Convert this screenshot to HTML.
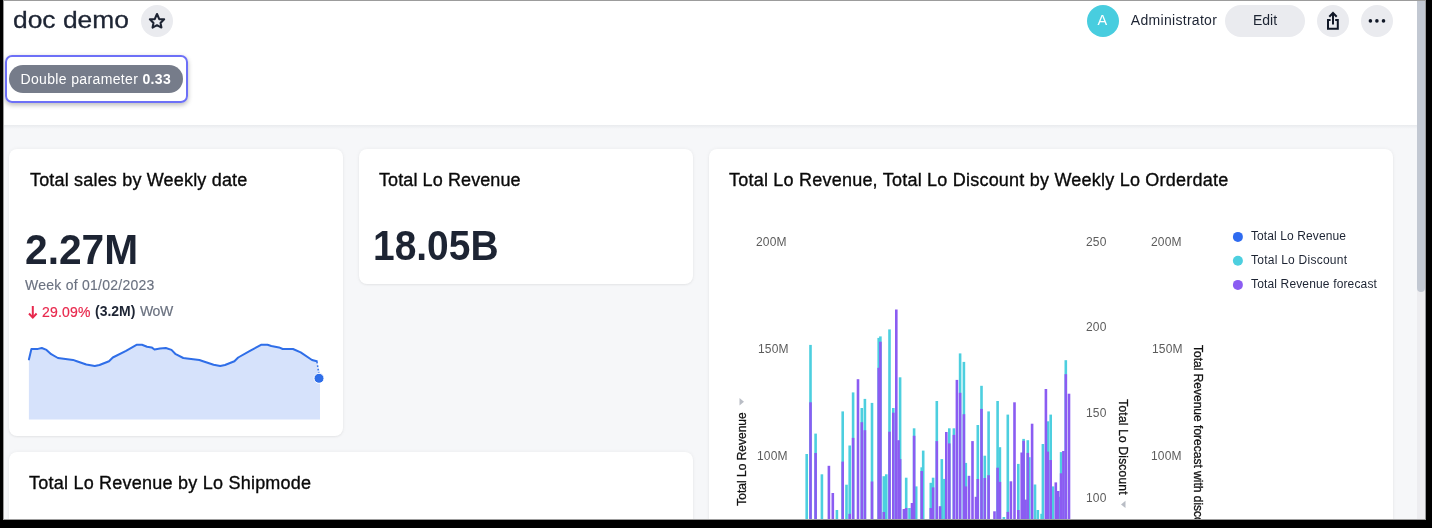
<!DOCTYPE html>
<html><head><meta charset="utf-8">
<style>
*{box-sizing:border-box;margin:0;padding:0}
html,body{width:1432px;height:528px;overflow:hidden;background:#000;font-family:"Liberation Sans",sans-serif}
.win{position:absolute;left:3px;top:0;width:1423px;height:520px;background:#9c9c9c;overflow:hidden}
.inner{position:absolute;left:1px;top:1px;width:1421px;height:518px;background:#f6f7f9;overflow:hidden}
.hdr{position:absolute;left:0;top:0;width:1413px;height:124px;background:#fff}
.hsh{position:absolute;left:0;top:124px;width:1413px;height:4px;background:linear-gradient(#e9ebee,#f6f7f9)}
.abs{position:absolute;white-space:nowrap}
.sb{position:absolute;left:1413px;top:0;width:8px;height:518px;background:#ededf0}
.thumb{position:absolute;left:0;top:0;width:8px;height:291px;background:#c2c8d2;border-radius:0 0 4px 4px}
.card{position:absolute;background:#fff;border-radius:8px;box-shadow:0 0 4px rgba(0,0,0,0.05),0 1px 2px rgba(0,0,0,0.05)}
.title{position:absolute;font-size:18px;line-height:22px;color:#0f1218;white-space:nowrap}
.btn{position:absolute;border-radius:16px;background:#eaebef}
.ov{position:absolute;left:0;top:0;width:1432px;height:519px;overflow:hidden;will-change:transform}
.t{position:absolute;white-space:nowrap;line-height:1}
.ax{position:absolute;white-space:nowrap;font-size:12px;line-height:14px;color:#5c5c5c;letter-spacing:0.2px}
.lg{position:absolute;white-space:nowrap;font-size:12px;line-height:14px;color:#1d2433}
</style></head><body>
<div class="win"><div class="inner">
  <div class="hdr">
    <div class="btn" style="left:137px;top:4px;width:32px;height:32px"></div>
    <div class="abs" style="left:1082.5px;top:4px;width:32px;height:32px;border-radius:50%;background:#48cddf"></div>
    <div class="btn" style="left:1221px;top:4px;width:80px;height:32px"></div>
    <div class="btn" style="left:1313px;top:4px;width:32px;height:32px"></div>
    <div class="btn" style="left:1357px;top:4px;width:32px;height:32px"></div>
    <div class="abs" style="left:1px;top:54px;width:183px;height:48px;border:2px solid #6d70f7;border-radius:7px;box-shadow:0 2px 5px rgba(0,0,0,0.28)"></div>
    <div class="abs" style="left:5px;top:64px;width:174px;height:28px;border-radius:14px;background:#767c8a"></div>
  </div>
  <div class="hsh"></div>
  <div class="sb"><div class="thumb"></div></div>
  <div class="card" style="left:5px;top:147.5px;width:334px;height:287.5px"></div>
  <div class="card" style="left:355px;top:148px;width:334px;height:135px"></div>
  <div class="card" style="left:705px;top:148px;width:684px;height:400px"></div>
  <div class="card" style="left:5px;top:451px;width:684px;height:100px"></div>
</div></div>
<div class="ov">
  <!-- header text -->
  <div class="t" style="left:13px;top:8px;font-size:24px;color:#1d2433;transform-origin:0 0;transform:scaleX(1.1);-webkit-text-stroke:0.3px #1d2433">doc demo</div>
  <div class="t" style="left:1097.5px;top:13px;font-size:14.5px;color:#fff">A</div>
  <div class="t" style="left:1130.8px;top:13px;font-size:14px;color:#1d2433;letter-spacing:0.3px">Administrator</div>
  <div class="t" style="left:1253px;top:13px;font-size:14px;color:#1d2433;letter-spacing:0px">Edit</div>
  <div class="t" style="left:20.5px;top:72px;font-size:14px;color:#fff;letter-spacing:0.35px">Double parameter <b>0.33</b></div>
  <!-- card titles -->
  <div class="t" style="left:30px;top:171px;font-size:18px;color:#0a0a0a;-webkit-text-stroke:0.35px #0a0a0a;letter-spacing:0.18px">Total sales by Weekly date</div>
  <div class="t" style="left:379px;top:171px;font-size:18px;color:#0a0a0a;-webkit-text-stroke:0.35px #0a0a0a;letter-spacing:0.1px">Total Lo Revenue</div>
  <div class="t" style="left:729px;top:171px;font-size:18px;color:#0a0a0a;-webkit-text-stroke:0.35px #0a0a0a;letter-spacing:0.22px">Total Lo Revenue, Total Lo Discount by Weekly Lo Orderdate</div>
  <div class="t" style="left:29px;top:474px;font-size:18px;color:#0a0a0a;-webkit-text-stroke:0.35px #0a0a0a;letter-spacing:0.23px">Total Lo Revenue by Lo Shipmode</div>
  <!-- KPI 1 -->
  <div class="t" style="left:25px;top:229px;font-size:42px;font-weight:bold;color:#1d2433;transform-origin:0 0;transform:scaleX(0.969)">2.27M</div>
  <div class="t" style="left:25px;top:278px;font-size:14px;color:#6b7280;letter-spacing:0.25px;-webkit-text-stroke:0.15px #6b7280">Week of 01/02/2023</div>
  <div class="t" style="left:42px;top:304.5px;font-size:14px;color:#e8294d;letter-spacing:0.2px;-webkit-text-stroke:0.2px #e8294d">29.09%</div>
  <div class="t" style="left:95px;top:304px;font-size:14px;font-weight:bold;color:#1d2433">(3.2M)</div>
  <div class="t" style="left:140px;top:304px;font-size:14px;color:#6b7280;letter-spacing:-0.4px;-webkit-text-stroke:0.2px #6b7280">WoW</div>
  <!-- KPI 2 -->
  <div class="t" style="left:373px;top:225px;font-size:42px;font-weight:bold;color:#1d2433;transform-origin:0 0;transform:scaleX(0.927)">18.05B</div>
  <!-- axes -->
  <div class="ax" style="left:756px;top:235px">200M</div>
  <div class="ax" style="left:758px;top:342px">150M</div>
  <div class="ax" style="left:757px;top:449px">100M</div>
  <div class="ax" style="left:1086px;top:235px">250</div>
  <div class="ax" style="left:1086px;top:320px">200</div>
  <div class="ax" style="left:1086px;top:406px">150</div>
  <div class="ax" style="left:1086px;top:491px">100</div>
  <div class="ax" style="left:1151px;top:235px">200M</div>
  <div class="ax" style="left:1152px;top:342px">150M</div>
  <div class="ax" style="left:1151px;top:449px">100M</div>
  <div class="t" style="left:741.5px;top:459px;font-size:12px;color:#111;-webkit-text-stroke:0.3px #111;transform:translate(-50%,-50%) rotate(-90deg)">Total Lo Revenue</div>
  <div class="t" style="left:1123px;top:447px;font-size:12px;color:#111;letter-spacing:0.2px;-webkit-text-stroke:0.3px #111;transform:translate(-50%,-50%) rotate(90deg)">Total Lo Discount</div>
  <div class="t" style="left:1198px;top:345px;font-size:12px;color:#111;-webkit-text-stroke:0.3px #111;transform-origin:0 0;transform:translate(6px,0) rotate(90deg)">Total Revenue forecast with discount</div>
  <!-- legend -->
  <div class="lg" style="left:1251px;top:229px;letter-spacing:0.1px">Total Lo Revenue</div>
  <div class="lg" style="left:1251px;top:253px;letter-spacing:0.25px">Total Lo Discount</div>
  <div class="lg" style="left:1251px;top:277px;letter-spacing:0.15px">Total Revenue forecast</div>
  <svg class="ov" width="1432" height="519" viewBox="0 0 1432 519">
    <!-- star -->
    <path d="M157,14 L159.25,19.1 L164.13,19.18 L160.5,22.9 L161.41,27.57 L157,25.2 L152.59,27.57 L153.5,22.9 L149.87,19.18 L154.75,19.1 Z" fill="none" stroke="#1d2433" stroke-width="2.1" stroke-linejoin="round"/>
    <!-- share -->
    <g transform="translate(1317,5)" fill="none" stroke="#111827" stroke-width="2">
      <path d="M16,8.5 V19.5"/><path d="M12.3,11.7 L16,8 L19.7,11.7"/><path d="M13.6,15 H11 V23.8 H20.8 V15 H18.2" stroke-linejoin="miter"/>
    </g>
    <g fill="#111827"><circle cx="1370.4" cy="20.9" r="1.8"/><circle cx="1376.9" cy="20.9" r="1.8"/><circle cx="1383.5" cy="20.9" r="1.8"/></g>
    <!-- red arrow -->
    <g stroke="#e8294d" stroke-width="2" fill="none"><path d="M32.8,306 V317.5"/><path d="M29,313.5 L32.8,317.6 L36.6,313.5"/></g>
    <path d="M28.9,359.4 L31.4,348.9 L38.0,348.9 L41.8,348.0 L46.5,349.9 L51.2,354.2 L57.9,358.0 L61.7,358.4 L73.0,359.9 L76.8,361.2 L86.3,364.5 L94.8,366.0 L99.5,365.0 L109.0,361.2 L112.8,357.5 L126.0,350.8 L136.5,344.8 L142.0,344.8 L147.0,346.7 L151.6,347.4 L154.5,349.5 L160.0,348.6 L165.8,348.0 L171.5,349.9 L175.7,354.2 L183.3,358.0 L187.0,358.4 L199.4,360.0 L203.0,361.2 L213.6,364.7 L220.2,366.0 L225.0,365.0 L234.4,361.2 L238.2,357.5 L249.5,351.2 L261.0,344.8 L267.5,344.8 L271.3,346.0 L279.0,347.4 L282.7,349.0 L293.0,349.0 L300.7,352.3 L312.0,360.0 L316.8,361.2 L320,372 L320,419.5 L28.9,419.5 Z" fill="#d6e2fb"/><path d="M28.9,359.4 L31.4,348.9 L38.0,348.9 L41.8,348.0 L46.5,349.9 L51.2,354.2 L57.9,358.0 L61.7,358.4 L73.0,359.9 L76.8,361.2 L86.3,364.5 L94.8,366.0 L99.5,365.0 L109.0,361.2 L112.8,357.5 L126.0,350.8 L136.5,344.8 L142.0,344.8 L147.0,346.7 L151.6,347.4 L154.5,349.5 L160.0,348.6 L165.8,348.0 L171.5,349.9 L175.7,354.2 L183.3,358.0 L187.0,358.4 L199.4,360.0 L203.0,361.2 L213.6,364.7 L220.2,366.0 L225.0,365.0 L234.4,361.2 L238.2,357.5 L249.5,351.2 L261.0,344.8 L267.5,344.8 L271.3,346.0 L279.0,347.4 L282.7,349.0 L293.0,349.0 L300.7,352.3 L312.0,360.0 L316.8,361.2" fill="none" stroke="#2f6ee8" stroke-width="2" stroke-linejoin="round" stroke-linecap="round"/><path d="M317,362 L319,375" stroke="#2f6ee8" stroke-width="1.5" stroke-dasharray="1.5 2"/><circle cx="319" cy="378.3" r="5" fill="#2f6ee8" stroke="#fff" stroke-width="1"/>
    <g fill="#4dcfdf"><rect x="809.2" y="344.9" width="2.6" height="175.1"/><rect x="851.8" y="392.4" width="2.6" height="127.6"/><rect x="863.6" y="398.9" width="2.6" height="121.1"/><rect x="877.4" y="337.9" width="2.6" height="182.1"/><rect x="879.1" y="336.4" width="2.6" height="183.6"/><rect x="888.2" y="329.4" width="2.6" height="190.6"/><rect x="898.8" y="377.3" width="2.6" height="142.7"/><rect x="958.8" y="353.4" width="2.6" height="166.6"/><rect x="962.6" y="361.9" width="2.6" height="158.1"/><rect x="980.2" y="385.8" width="2.6" height="134.2"/><rect x="1064.5" y="360.2" width="2.6" height="159.8"/><rect x="805.4" y="454.0" width="2.6" height="66.0"/><rect x="814.3" y="433.6" width="2.6" height="86.4"/><rect x="820.6" y="474.3" width="2.6" height="45.7"/><rect x="835.6" y="510.0" width="2.6" height="10.0"/><rect x="841.4" y="411.4" width="2.6" height="108.6"/><rect x="845.2" y="484.7" width="2.6" height="35.3"/><rect x="848.4" y="445.5" width="2.6" height="74.5"/><rect x="860.5" y="408.0" width="2.6" height="112.0"/><rect x="870.7" y="402.9" width="2.6" height="117.1"/><rect x="882.5" y="476.2" width="2.6" height="43.8"/><rect x="885.0" y="474.3" width="2.6" height="45.7"/><rect x="892.0" y="408.0" width="2.6" height="112.0"/><rect x="904.9" y="477.7" width="2.6" height="42.3"/><rect x="908.2" y="508.0" width="2.6" height="12.0"/><rect x="912.8" y="428.3" width="2.6" height="91.7"/><rect x="914.9" y="486.4" width="2.6" height="33.6"/><rect x="920.4" y="467.3" width="2.6" height="52.7"/><rect x="921.9" y="450.6" width="2.6" height="69.4"/><rect x="929.5" y="482.8" width="2.6" height="37.2"/><rect x="931.8" y="477.7" width="2.6" height="42.3"/><rect x="935.5" y="401.0" width="2.6" height="119.0"/><rect x="940.5" y="459.1" width="2.6" height="60.9"/><rect x="943.1" y="478.9" width="2.6" height="41.1"/><rect x="948.0" y="428.3" width="2.6" height="91.7"/><rect x="952.6" y="428.3" width="2.6" height="91.7"/><rect x="964.5" y="462.9" width="2.6" height="57.1"/><rect x="976.5" y="425.0" width="2.6" height="95.0"/><rect x="983.5" y="455.7" width="2.6" height="64.3"/><rect x="987.3" y="411.4" width="2.6" height="108.6"/><rect x="996.3" y="401.0" width="2.6" height="119.0"/><rect x="998.6" y="447.2" width="2.6" height="72.8"/><rect x="1002.6" y="517.0" width="2.6" height="3.0"/><rect x="1006.5" y="414.6" width="2.6" height="105.4"/><rect x="1017.0" y="463.9" width="2.6" height="56.1"/><rect x="1022.3" y="438.9" width="2.6" height="81.1"/><rect x="1026.5" y="440.2" width="2.6" height="79.8"/><rect x="1028.0" y="457.2" width="2.6" height="62.8"/><rect x="1033.7" y="484.5" width="2.6" height="35.5"/><rect x="1036.5" y="510.0" width="2.6" height="10.0"/><rect x="1040.3" y="513.8" width="2.6" height="6.2"/><rect x="1041.6" y="444.0" width="2.6" height="76.0"/><rect x="1046.5" y="421.3" width="2.6" height="98.7"/><rect x="1049.4" y="414.6" width="2.6" height="105.4"/><rect x="1051.7" y="486.4" width="2.6" height="33.6"/><rect x="1058.2" y="496.8" width="2.6" height="23.2"/><rect x="1059.8" y="452.1" width="2.6" height="67.9"/></g><g fill="#8b5cf2"><rect x="809.2" y="402.3" width="2.6" height="117.7"/><rect x="851.8" y="437.9" width="2.6" height="82.1"/><rect x="856.7" y="379.2" width="2.6" height="140.8"/><rect x="863.6" y="430.2" width="2.6" height="89.8"/><rect x="877.4" y="367.8" width="2.6" height="152.2"/><rect x="879.1" y="341.7" width="2.6" height="178.3"/><rect x="888.2" y="431.7" width="2.6" height="88.3"/><rect x="895.0" y="309.5" width="2.6" height="210.5"/><rect x="898.8" y="459.1" width="2.6" height="60.9"/><rect x="955.6" y="379.9" width="2.6" height="140.1"/><rect x="958.8" y="392.8" width="2.6" height="127.2"/><rect x="962.6" y="414.2" width="2.6" height="105.8"/><rect x="980.2" y="408.9" width="2.6" height="111.1"/><rect x="1044.6" y="389.0" width="2.6" height="131.0"/><rect x="1064.5" y="374.2" width="2.6" height="145.8"/><rect x="1067.7" y="393.7" width="2.6" height="126.3"/><rect x="814.3" y="453.0" width="2.6" height="67.0"/><rect x="827.6" y="465.8" width="2.6" height="54.2"/><rect x="831.5" y="493.0" width="2.6" height="27.0"/><rect x="841.4" y="461.6" width="2.6" height="58.4"/><rect x="848.4" y="513.8" width="2.6" height="6.2"/><rect x="860.5" y="422.2" width="2.6" height="97.8"/><rect x="870.7" y="481.5" width="2.6" height="38.5"/><rect x="882.5" y="512.0" width="2.6" height="8.0"/><rect x="892.0" y="412.7" width="2.6" height="107.3"/><rect x="897.3" y="440.2" width="2.6" height="79.8"/><rect x="902.6" y="509.0" width="2.6" height="11.0"/><rect x="904.9" y="508.0" width="2.6" height="12.0"/><rect x="910.7" y="503.0" width="2.6" height="17.0"/><rect x="912.8" y="435.8" width="2.6" height="84.2"/><rect x="920.4" y="471.0" width="2.6" height="49.0"/><rect x="929.5" y="508.0" width="2.6" height="12.0"/><rect x="931.8" y="487.4" width="2.6" height="32.6"/><rect x="935.5" y="441.1" width="2.6" height="78.9"/><rect x="938.8" y="506.2" width="2.6" height="13.8"/><rect x="945.0" y="432.0" width="2.6" height="88.0"/><rect x="948.0" y="443.4" width="2.6" height="76.6"/><rect x="952.6" y="434.9" width="2.6" height="85.1"/><rect x="964.5" y="486.4" width="2.6" height="33.6"/><rect x="967.7" y="475.8" width="2.6" height="44.2"/><rect x="971.2" y="441.1" width="2.6" height="78.9"/><rect x="974.7" y="496.8" width="2.6" height="23.2"/><rect x="976.5" y="479.0" width="2.6" height="41.0"/><rect x="983.5" y="478.0" width="2.6" height="42.0"/><rect x="987.3" y="475.2" width="2.6" height="44.8"/><rect x="993.2" y="511.3" width="2.6" height="8.7"/><rect x="996.3" y="467.7" width="2.6" height="52.3"/><rect x="998.6" y="481.9" width="2.6" height="38.1"/><rect x="1006.5" y="511.9" width="2.6" height="8.1"/><rect x="1009.6" y="481.3" width="2.6" height="38.7"/><rect x="1013.2" y="402.3" width="2.6" height="117.7"/><rect x="1017.0" y="510.0" width="2.6" height="10.0"/><rect x="1020.4" y="452.5" width="2.6" height="67.5"/><rect x="1022.3" y="440.8" width="2.6" height="79.2"/><rect x="1024.3" y="499.6" width="2.6" height="20.4"/><rect x="1026.5" y="452.9" width="2.6" height="67.1"/><rect x="1030.8" y="423.7" width="2.6" height="96.3"/><rect x="1046.5" y="451.6" width="2.6" height="68.4"/><rect x="1049.4" y="460.0" width="2.6" height="60.0"/><rect x="1054.5" y="482.4" width="2.6" height="37.6"/><rect x="1056.9" y="491.0" width="2.6" height="29.0"/><rect x="1059.8" y="473.3" width="2.6" height="46.7"/><rect x="1062.1" y="451.0" width="2.6" height="69.0"/></g>
    <!-- axis triangles -->
    <path d="M739.5,398 L744,401.7 L739.5,405.4 Z" fill="#b9bdc5"/>
    <path d="M1125.5,500.7 L1121,504.4 L1125.5,508.1 Z" fill="#b9bdc5"/>
    <!-- legend dots -->
    <circle cx="1237.9" cy="236.9" r="5" fill="#2f6bf0"/>
    <circle cx="1237.9" cy="260.8" r="5" fill="#4dcfdf"/>
    <circle cx="1237.9" cy="284.9" r="5" fill="#8b5cf2"/>
  </svg>
</div>
</body></html>
